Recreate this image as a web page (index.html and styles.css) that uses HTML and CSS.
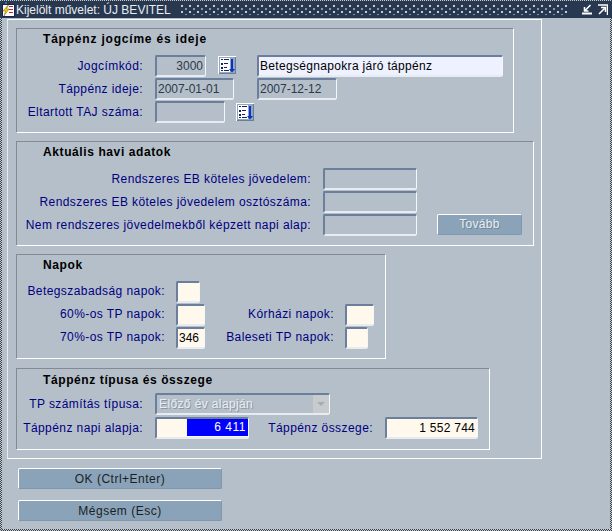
FILE: index.html
```html
<!DOCTYPE html>
<html lang="hu">
<head>
<meta charset="utf-8">
<title>Kijelölt művelet</title>
<link rel="stylesheet" href="styles.css">
</head>
<body>
<svg width="0" height="0" class="defs">
  <symbol id="lov" viewBox="0 0 18 18">
    <rect width="18" height="18" fill="#8fa8c0"/>
    <path d="M0 0H18V1H1V18H0Z" fill="#fff"/>
    <path d="M17 1H18V18H1V17H17Z" fill="#6a7f96"/>
    <rect x="2" y="2" width="10" height="14" fill="#fff"/>
    <path d="M3 3h2v1H3zM6 3h5v1H6zM3 7h2v2H3zM6 7h4v1H6zM3 11h2v2H3zM6 11h3v1H6zM3 14h2v1H3zM6 14h5v1H6z" fill="#10206a"/>
    <path d="M13 3h2v10h2l-3 3.500-3-3.500h2z" fill="#0a32c8"/>
  </symbol>
</svg>
<div class="window">
  <header class="titlebar">
    <svg class="appicon" width="13" height="15" viewBox="0 0 13 15">
      <rect x="0" y="2" width="13" height="13" fill="#1a2350"/>
      <rect x="3" y="0" width="2" height="2" fill="#5060a0"/>
      <rect x="1" y="3" width="11" height="11" fill="#fff"/>
      <path d="M7 4h4v1H7zM7 7h4v1H7zM7 10h4v1H7z" fill="#c02030"/>
      <path d="M6 3 1 9h2.500l-1.500 5 5-7H4.500l2-4z" fill="#f4d000" stroke="#604000" stroke-width=".4"/>
    </svg>
    <span class="title-text">Kijelölt művelet: ÚJ BEVITEL</span>
    <span class="title-dots"></span>
    <svg class="winbtn" width="10" height="11" viewBox="0 0 10 11">
      <path d="M0 9.500h10" stroke="#fff" stroke-width="2"/>
      <path d="M8.500 1 3 6.500M2.500 3v4h4" stroke="#fff" stroke-width="1.600" fill="none"/>
    </svg>
    <svg class="winbtn" width="10" height="11" viewBox="0 0 10 11">
      <path d="M0 1h9.500v10" stroke="#fff" stroke-width="1.500" fill="none"/>
      <path d="M1 10 6.500 4.500M3 3.500h4.500v4.500" stroke="#fff" stroke-width="1.500" fill="none"/>
    </svg>
  </header>
  <main class="content">
    <div class="panel">
      <section class="group g1">
        <h2 class="group-title t1">Táppénz jogcíme és ideje</h2>
        <div class="row">
          <label class="lbl w126">Jogcímkód:</label>
          <div class="field dis right f51">3000</div>
          <svg class="lov lov1"><use href="#lov"/></svg>
          <div class="field text f246">Betegségnapokra járó táppénz</div>
        </div>
        <div class="row">
          <label class="lbl w126">Táppénz ideje:</label>
          <div class="field dis f79">2007-01-01</div>
          <div class="field dis f80 after-date">2007-12-12</div>
        </div>
        <div class="row">
          <label class="lbl w126">Eltartott TAJ száma:</label>
          <div class="field dis f70"></div>
          <svg class="lov lov2"><use href="#lov"/></svg>
        </div>
      </section>
      <section class="group g2">
        <h2 class="group-title t2">Aktuális havi adatok</h2>
        <div class="row">
          <label class="lbl w294">Rendszeres EB köteles jövedelem:</label>
          <div class="field dis f94"></div>
        </div>
        <div class="row">
          <label class="lbl w294">Rendszeres EB köteles jövedelem osztószáma:</label>
          <div class="field dis f94"></div>
        </div>
        <div class="row">
          <label class="lbl w294">Nem rendszeres jövedelmekből képzett napi alap:</label>
          <div class="field dis f94"></div>
          <div class="btn btn-dis">Tovább</div>
        </div>
      </section>
      <section class="group g3">
        <h2 class="group-title t3">Napok</h2>
        <div class="row">
          <label class="lbl w148">Betegszabadság napok:</label>
          <div class="field num f24"></div>
        </div>
        <div class="row">
          <label class="lbl w148">60%-os TP napok:</label>
          <div class="field num f29"></div>
          <label class="lbl w129">Kórházi napok:</label>
          <div class="field num f29"></div>
        </div>
        <div class="row">
          <label class="lbl w148">70%-os TP napok:</label>
          <div class="field num f29">346</div>
          <label class="lbl w129">Baleseti TP napok:</label>
          <div class="field num f23"></div>
        </div>
      </section>
      <section class="group g4">
        <h2 class="group-title t4">Táppénz típusa és összege</h2>
        <div class="row row-tall">
          <label class="lbl w126">TP számítás típusa:</label>
          <div class="field select">
            <span class="select-text">Előző év alapján</span>
            <span class="select-arrow"></span>
          </div>
        </div>
        <div class="row">
          <label class="lbl w126">Táppénz napi alapja:</label>
          <div class="field num f94 pick"><span class="selected">6 411</span></div>
          <label class="lbl w124">Táppénz összege:</label>
          <div class="field num right f93 sum">1 552 744</div>
        </div>
      </section>
    </div>
    <div class="actions">
      <div class="btn btn-main">OK (Ctrl+Enter)</div>
      <div class="btn btn-main">Mégsem (Esc)</div>
    </div>
  </main>
</div>
</body>
</html>
```
FILE: styles.css
```css
* { box-sizing: border-box; }
html, body { margin: 0; padding: 0; }
body {
  width: 612px;
  height: 531px;
  overflow: hidden;
  background-color: #b5bfc9;
  background-image: repeating-conic-gradient(#3a4048 0 25%, #c4cad0 0 50%);
  background-size: 2px 2px;
  font-family: "Liberation Sans", Arial, sans-serif;
  font-size: 12px;
}
.defs { position: absolute; }
.window {
  margin: 1px 2px 0;
  height: 528px;
  display: flex;
  flex-direction: column;
  background: #b5bfc9;
}
.titlebar {
  height: 17px;
  margin: 0 -2px 0;
  background: #273850;
  display: flex;
  align-items: center;
  padding: 0 4px 0 2px;
  color: #fff;
  flex: none;
}
.appicon { flex: none; margin-right: 1px; }
.title-text {
  font-size: 12px;
  white-space: nowrap;
  color: #e8edf2;
}
.title-dots {
  flex: 1;
  height: 10px;
  margin: 0 9px 0 10px;
  background-image:
    radial-gradient(circle at 1px 1px, #c3cbd4 0.8px, transparent 1px),
    radial-gradient(circle at 1px 1px, #8593a4 0.8px, transparent 1px);
  background-size: 8px 6px;
  background-position: 0 0, 4px 3px;
}
.winbtn { flex: none; margin-left: 6px; }
.content { flex: 1; padding: 1px 0 0 5px; display: flex; flex-direction: column; }
.panel {
  width: 535px;
  height: 440px;
  border: 1px solid #fff;
  border-left-color: #e6ebf0;
  padding: 8px 0 0 8px;
  flex: none;
}
.group {
  border: 1px solid #fff;
  border-top-color: #858a90;
  border-left-color: #858a90;
}
.g1 { width: 498px; height: 105px; }
.g2 { width: 518px; height: 105px; margin-top: 8px; }
.g3 { width: 370px; height: 105px; margin-top: 8px; }
.g4 { width: 474px; height: 82px; margin-top: 9px; }
.group-title {
  margin: 0;
  padding-left: 26px;
  font-size: 12px;
  font-weight: bold;
  line-height: 16px;
  letter-spacing: .6px;
  color: #000;
}
.t1 { height: 26px; padding-top: 2px; letter-spacing: .8px; }
.t2 { height: 26px; padding-top: 2px; }
.t3 { height: 26px; padding-top: 2px; }
.t4 { height: 24px; padding-top: 3px; }
.row { display: flex; align-items: flex-start; height: 23px; }
.row-tall { height: 24px; }
.lbl {
  flex: none;
  height: 21px;
  line-height: 23px;
  text-align: right;
  color: #000080;
  letter-spacing: .42px;
  white-space: nowrap;
  margin-right: 12px;
}
.g3 .lbl { line-height: 21px; }
.w126 { width: 126px; }
.w294 { width: 294px; }
.w148 { width: 148px; margin-right: 11px; }
.w129 { width: 129px; margin-right: 11px; }
.w124 { width: 124px; }
.field {
  flex: none;
  height: 22px;
  border: 2px solid #6b7f9c;
  border-right: 1px solid #f4f6f8;
  border-bottom: 2px solid #e8ecf0;
  border-radius: 2px;
  padding: 0 2px 0 1px;
  line-height: 18px;
  white-space: nowrap;
  overflow: hidden;
}
.dis { color: #2c3a4a; background: #b5bfc9; }
.text { background: #eef1ff; color: #000; letter-spacing: .32px; }
.num { background: #fff9ed; color: #000; }
.sum { letter-spacing: .25px; }
.right { text-align: right; }
.f51 { width: 51px; }
.f79 { width: 79px; }
.f80 { width: 80px; }
.f70 { width: 70px; }
.f94 { width: 94px; }
.f93 { width: 93px; }
.f246 { width: 246px; }
.f24 { width: 24px; }
.f29 { width: 29px; }
.f23 { width: 23px; }
.after-date { margin-left: 23px; }
.lov { flex: none; width: 18px; height: 18px; }
.lov1 { margin: 1px 0 0 12px; }
.lov1 + .field { margin-left: 21px; }
.lov2 { margin: 2px 0 0 11px; }
.select {
  width: 175px;
  display: flex;
  background: #b5bfc9;
  padding: 0 0 0 2px;
}
.select-text {
  flex: 1;
  color: #e9edf1;
  letter-spacing: .38px;
  text-shadow: 1px 1px 0 #8a96a3;
}
.select-arrow {
  width: 16px;
  background: #c8cbce;
  position: relative;
}
.select-arrow::after {
  content: "";
  position: absolute;
  left: 4px;
  top: 7px;
  border: 4px solid transparent;
  border-top: 4px solid #a8acb0;
}
.pick { display: flex; justify-content: flex-end; padding: 0; }
.selected {
  width: 61px;
  height: 17px;
  line-height: 17px;
  background: #0000ff;
  color: #fff;
  text-align: right;
  padding-right: 2px;
  letter-spacing: .5px;
}
.btn {
  flex: none;
  text-align: center;
  border: 1px solid #7f97ac;
  border-top-color: #fff;
  border-left-color: #fff;
  border-radius: 2px;
  background: #8aa3b8;
}
.btn-dis {
  width: 85px;
  height: 21px;
  line-height: 19px;
  margin-left: 20px;
  color: #e9edf1;
  letter-spacing: .3px;
  text-shadow: 1px 1px 0 #6f8699;
}
.actions {
  display: flex;
  flex-direction: column;
  gap: 11px;
  margin: 9px 0 0 11px;
}
.btn-main {
  width: 204px;
  height: 21px;
  line-height: 20px;
  color: #1a1f26;
  letter-spacing: .5px;
}
```
